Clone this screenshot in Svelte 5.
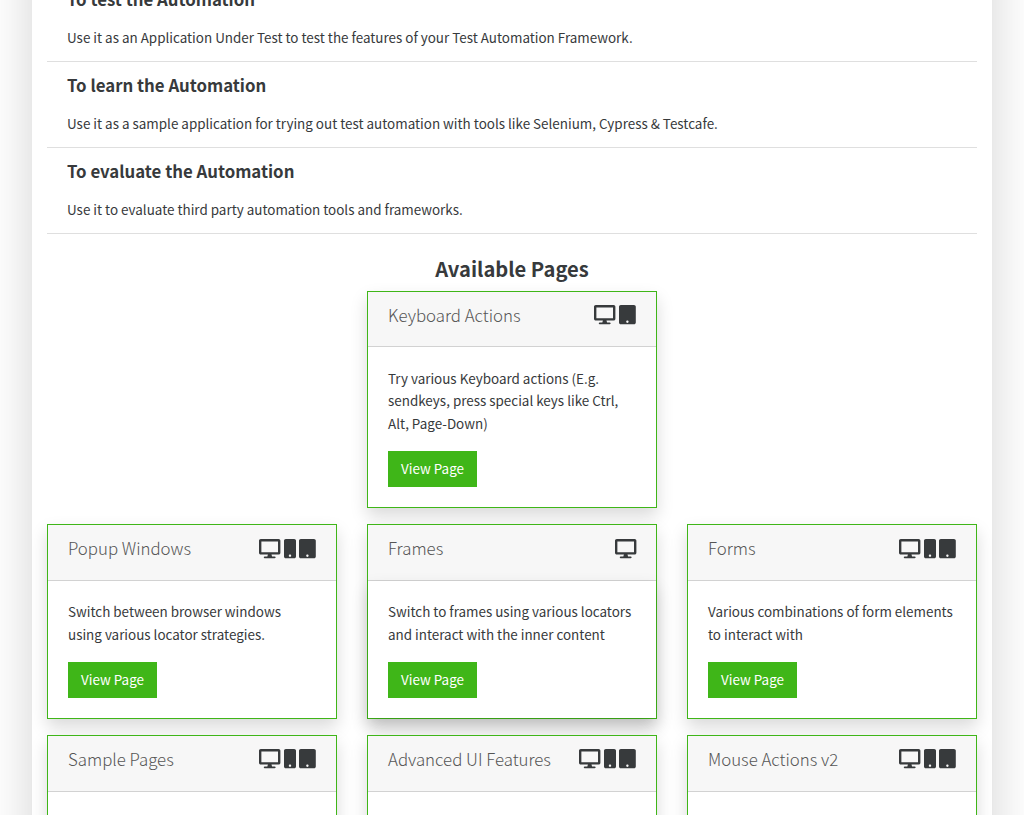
<script>
  const purposes = [
    { title: 'To test the Automation', text: 'Use it as an Application Under Test to test the features of your Test Automation Framework.' },
    { title: 'To learn the Automation', text: 'Use it as a sample application for trying out test automation with tools like Selenium, Cypress & Testcafe.' },
    { title: 'To evaluate the Automation', text: 'Use it to evaluate third party automation tools and frameworks.' }
  ];
  const all = ['desktop', 'mobile', 'tablet'];
  const rows = [
    [{ title: 'Keyboard Actions', lines: ['Try various Keyboard actions (E.g.', 'sendkeys, press special keys like Ctrl,', 'Alt, Page-Down)'], icons: ['desktop', 'tablet'] }],
    [
      { title: 'Popup Windows', lines: ['Switch between browser windows', 'using various locator strategies.'], icons: all },
      { title: 'Frames', lines: ['Switch to frames using various locators', 'and interact with the inner content'], icons: ['desktop'], raised: true },
      { title: 'Forms', lines: ['Various combinations of form elements', 'to interact with'], icons: all }
    ],
    [
      { title: 'Sample Pages', icons: all },
      { title: 'Advanced UI Features', icons: all },
      { title: 'Mouse Actions v2', icons: all }
    ]
  ];
</script>

<main>
  <ul>
    {#each purposes as p}
      <li><h4>{p.title}</h4><p>{p.text}</p></li>
    {/each}
  </ul>
  <h2>Available Pages</h2>
  {#each rows as row}
    <div class="row">
      {#each row as card}
        <article>
          <header>
            <h5>{card.title}</h5>
            <span class="icons">
              {#each card.icons as icon}
                {#if icon === 'desktop'}
                  <svg width="21.4" height="19.2" viewBox="0 0 576 512" preserveAspectRatio="none"><path d="M528 0H48C21.500 0 0 21.500 0 48v320c0 26.500 21.500 48 48 48h192l-16 48h-72c-13.300 0-24 10.700-24 24s10.700 24 24 24h272c13.300 0 24-10.700 24-24s-10.700-24-24-24h-72l-16-48h192c26.500 0 48-21.500 48-48V48c0-26.500-21.500-48-48-48zm-16 352H64V64h448v288z" /></svg>
                {:else if icon === 'mobile'}
                  <svg width="12" height="19.2" viewBox="0 0 320 512" preserveAspectRatio="none"><path d="M272 0H48C21.500 0 0 21.500 0 48v416c0 26.500 21.500 48 48 48h224c26.500 0 48-21.500 48-48V48c0-26.500-21.500-48-48-48zM160 480c-17.700 0-32-14.300-32-32s14.300-32 32-32 32 14.300 32 32-14.300 32-32 32z" /></svg>
                {:else}
                  <svg width="16.8" height="19.2" viewBox="0 0 448 512" preserveAspectRatio="none"><path d="M400 0H48C21.500 0 0 21.500 0 48v416c0 26.500 21.500 48 48 48h352c26.500 0 48-21.500 48-48V48c0-26.500-21.500-48-48-48zM224 480c-17.700 0-32-14.300-32-32s14.300-32 32-32 32 14.300 32 32-14.300 32-32 32z" /></svg>
                {/if}
              {/each}
            </span>
          </header>
          <div class="body" class:raised={card.raised}>
            {#if card.lines}
              <p>{#each card.lines as line}<span>{line}</span>{/each}</p>
              <button>View Page</button>
            {/if}
          </div>
        </article>
      {/each}
    </div>
  {/each}
</main>

<style>
  :global(body) { background: #fff; overflow: hidden; }
  :global(#app) { height: 815px; overflow: hidden; }
  main {
    box-sizing: border-box; width: 960px; height: 1200px; margin: -124px auto 0; padding: 100px 15px 0;
    background: #fff; box-shadow: 0 16px 48px rgba(0, 0, 0, .175);
    font: 13.43px/22.5px "Noto Sans CJK SC", "Noto Sans CJK JP", sans-serif; color: #373a3c;
  }
  ul { list-style: none; margin: 0; padding: 0; }
  li { box-sizing: border-box; height: 86px; padding: 11px 20px 0; border-bottom: 1px solid #dfdfdf; white-space: nowrap; }
  h2, h4, h5, p { margin: 0; }
  h4 { font-size: 16.8px; line-height: 24px; font-weight: 700; }
  li p { margin-top: 15px; }
  h2 { height: 56.6px; box-sizing: border-box; padding-top: 21px; font-size: 20.15px; line-height: 27px; font-weight: 700; text-align: center; }
  .row { display: flex; justify-content: center; gap: 30px; margin-bottom: 16px; }
  article { box-sizing: border-box; width: 290px; min-height: 194.8px; border: 1px solid #3fb618; background: #fff; box-shadow: 0 8px 16px rgba(0, 0, 0, .15); }
  header { box-sizing: border-box; height: 55.86px; padding: 11.5px 20px; display: flex; justify-content: space-between; background: rgba(0, 0, 0, .03); border-bottom: 1px solid rgba(0, 0, 0, .15); }
  h5 { font-size: 16.82px; line-height: 24px; font-weight: 300; color: #555; }
  .icons { display: flex; gap: 3.4px; padding-top: 2.1px; }
  svg { fill: #373a3c; overflow: visible; }
  .body { padding: 19.4px 20px 20px; }
  .raised { box-shadow: 0 8px 16px rgba(0, 0, 0, .15); }
  .body p { margin-bottom: 16.6px; }
  .body span { display: block; white-space: nowrap; }
  button { display: block; width: 89px; height: 36px; padding: 0 0 .6px; border: 0; background: #3fb618; color: #fff; font: inherit; }
</style>
